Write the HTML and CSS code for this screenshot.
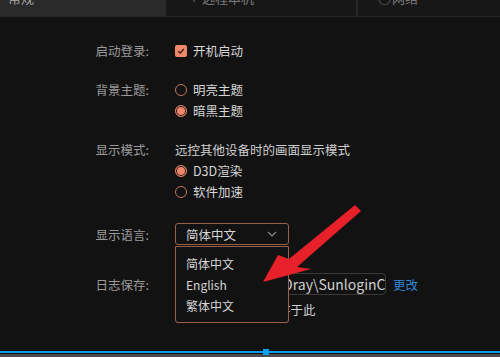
FILE: index.html
```html
<!DOCTYPE html>
<html lang="zh-CN">
<head>
    <meta charset="UTF-8">
    <meta name="viewport" content="width=device-width, initial-scale=1.0">
    <title>设置</title>
    <link rel="stylesheet" href="styles.css">
</head>
<body>
  <div class="page">
    <div class="tabs">
      <div class="tab tab-active"><span class="tab-text">常规</span></div>
      <div class="tab tab-mid"><span class="tab-text"><span class="tab-ico">&#x2039;</span>远程本机</span></div>
      <div class="tab tab-last"><span class="tab-text"><span class="tab-ico">&#x25CB;</span>网络</span></div>
    </div>

    <div class="settings">
      <div class="row row-first">
        <div class="label">启动登录:</div>
        <div class="ctrl">
          <div class="opt"><span class="check"><svg width="8" height="8" viewBox="0 0 8 8"><path d="M1.2 4.2 L3.2 6 L6.8 2" fill="none" stroke="#3a2018" stroke-width="1.3"/></svg></span>开机启动</div>
        </div>
      </div>

      <div class="row">
        <div class="label">背景主题:</div>
        <div class="ctrl">
          <div class="opt"><span class="radio"></span>明亮主题</div>
          <div class="opt"><span class="radio radio-on"></span>暗黑主题</div>
        </div>
      </div>

      <div class="row">
        <div class="label">显示模式:</div>
        <div class="ctrl">
          <div class="opt desc">远控其他设备时的画面显示模式</div>
          <div class="opt"><span class="radio radio-on"></span>D3D渲染</div>
          <div class="opt"><span class="radio"></span>软件加速</div>
        </div>
      </div>

      <div class="row row-lang">
        <div class="label">显示语言:</div>
        <div class="ctrl">
          <div class="select">
            <span>简体中文</span>
            <svg width="10" height="6" viewBox="0 0 10 6"><path d="M1 1 L5 5 L9 1" fill="none" stroke="#8a8a8a" stroke-width="1.1"/></svg>
            <div class="menu">
              <div class="menu-item">简体中文</div>
              <div class="menu-item">English</div>
              <div class="menu-item">繁体中文</div>
            </div>
          </div>
        </div>
      </div>

      <div class="row row-log">
        <div class="label">日志保存:</div>
        <div class="ctrl log-ctrl">
          <div class="path">C:\ProgramData\Oray\SunloginClient\log</div>
          <a class="change">更改</a>
        </div>
      </div>

      <div class="row row-note">
        <div class="label"></div>
        <div class="ctrl">
          <div class="opt note">新日志文件将会保存于此</div>
        </div>
      </div>
    </div>

    <div class="bottom">
      <div class="blue-line"><span class="handle"></span></div>
      <div class="gray-bar"></div>
    </div>

    <svg class="arrow" width="500" height="357" viewBox="0 0 500 357">
      <polygon points="263,282 278,255 289,259 355,205 361,211 297,267 311,269" fill="#e8202a"/>
    </svg>
  </div>
</body>
</html>
```

FILE: styles.css
```css
body {
  margin: 0;
  background: #121212;
  font-family: "Noto Sans CJK SC", "Noto Sans", sans-serif;
  font-size: 12.5px;
  color: #d4d4d4;
}

.page {
  position: relative;
  width: 500px;
  height: 357px;
  display: flex;
  flex-direction: column;
  overflow: hidden;
}

/* tab strip, mostly scrolled off the top */
.tabs {
  display: flex;
  height: 16px;
  border-bottom: 1px solid #262626;
  overflow: hidden;
}

.tab {
  background: #171717;
  color: #7a7a7a;
  font-size: 13px;
}

.tab-text {
  display: block;
  line-height: 20px;
  margin-top: -12px;
}

.tab-active {
  width: 166px;
  background: #2a2a2a;
  color: #a8a8a8;
}

.tab-active .tab-text {
  padding-left: 8px;
}

.tab-mid {
  width: 190px;
  border-right: 2px solid #262626;
}

.tab-mid .tab-text {
  padding-left: 22px;
}

.tab-last {
  flex: 1;
}

.tab-last .tab-text {
  padding-left: 20px;
}

.tab-ico {
  display: inline-block;
  width: 12px;
  margin-right: 2px;
  text-align: center;
}

/* settings form */
.settings {
  flex: 1;
  padding-top: 23px;
}

.row {
  display: grid;
  grid-template-columns: 149px 1fr;
  column-gap: 26px;
  margin-top: 18px;
  line-height: 21px;
}

.row-first {
  margin-top: 0;
}

.label {
  text-align: right;
  color: #9a9a9a;
}

.opt {
  display: flex;
  align-items: center;
  height: 21px;
  color: #d6d6d6;
}

.desc {
  color: #cfcfcf;
}

.check {
  width: 12px;
  height: 12px;
  border-radius: 2px;
  background: #f0866a;
  margin-right: 6px;
  display: flex;
  align-items: center;
  justify-content: center;
}

.radio {
  box-sizing: border-box;
  width: 12px;
  height: 12px;
  border-radius: 50%;
  border: 1.5px solid #c0755f;
  margin-right: 6px;
}

.radio-on {
  border-color: #d9826a;
  background: #f0866a;
  box-shadow: inset 0 0 0 1px #121212;
}

.row-lang {
  margin-top: 21px;
  align-items: center;
}

.select {
  position: relative;
  box-sizing: border-box;
  width: 114px;
  height: 22px;
  border: 1px solid #9a5f4b;
  border-radius: 3px;
  display: flex;
  align-items: center;
  justify-content: space-between;
  padding: 0 11px 0 10px;
  color: #d6d6d6;
}

.menu {
  position: absolute;
  top: 22px;
  left: -1px;
  z-index: 2;
  box-sizing: border-box;
  width: 114px;
  height: 77px;
  border: 1px solid #9a5f4b;
  border-radius: 0 0 3px 3px;
  background: #121212;
  padding: 6px 0 0 10px;
}

.menu-item {
  line-height: 21px;
  font-size: 12px;
  color: #d6d6d6;
}

.row-log {
  margin-top: 28px;
  align-items: center;
}

.log-ctrl {
  display: flex;
  align-items: center;
}

.path {
  box-sizing: border-box;
  width: 211px;
  height: 22px;
  line-height: 20px;
  border: 1px solid #3a3a3a;
  border-radius: 4px;
  padding: 0 8px;
  text-indent: -12px;
  font-size: 14px;
  white-space: nowrap;
  overflow: hidden;
  color: #d0d0d0;
}

.change {
  margin-left: 7px;
  color: #2f86d8;
  cursor: pointer;
}

.row-note {
  margin-top: 4px;
}

.note {
  padding-left: 3px;
  color: #d0d0d0;
}

/* bottom strip */
.bottom {
  height: 8px;
}

.blue-line {
  position: relative;
  margin-top: 2px;
  height: 2px;
  background: #0b9ae6;
}

.handle {
  position: absolute;
  left: 263px;
  top: -2px;
  width: 6px;
  height: 6px;
  background: #0aa0f0;
}

.gray-bar {
  margin-top: 1px;
  height: 3px;
  background: #4a4a4a;
}

.arrow {
  position: absolute;
  left: 0;
  top: 0;
  z-index: 5;
  pointer-events: none;
}
```
